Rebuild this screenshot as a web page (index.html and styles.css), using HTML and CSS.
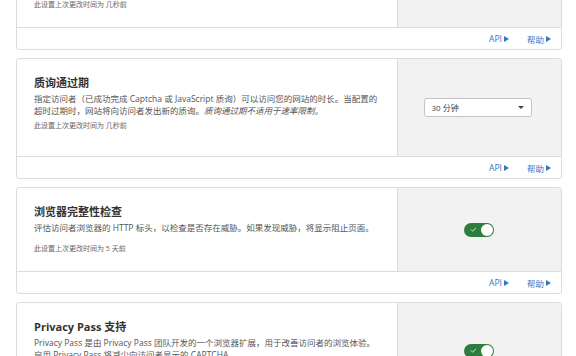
FILE: index.html
```html
<!DOCTYPE html>
<html lang="zh-CN">
<head>
<meta charset="utf-8">
<link rel="stylesheet" href="styles.css">
</head>
<body>
<div class="page">
  <section class="card card--partial">
    <div class="card-main">
      <div class="card-info">
        <p class="stamp">此设置上次更改时间为 几秒前</p>
      </div>
      <div class="card-control"></div>
    </div>
    <div class="card-foot">
      <a class="link">API <span class="tri"></span></a>
      <a class="link">帮助 <span class="tri"></span></a>
    </div>
  </section>

  <section class="card">
    <div class="card-main">
      <div class="card-info info--two">
        <h3 class="title">质询通过期</h3>
        <p class="desc">指定访问者（已成功完成 Captcha 或 JavaScript 质询）可以访问您的网站的时长。当配置的超时过期时，网站将向访问者发出新的质询。<em>质询通过期不适用于速率限制。</em></p>
        <p class="stamp">此设置上次更改时间为 几秒前</p>
      </div>
      <div class="card-control">
        <div class="select"><span>30 分钟</span><span class="caret"></span></div>
      </div>
    </div>
    <div class="card-foot">
      <a class="link">API <span class="tri"></span></a>
      <a class="link">帮助 <span class="tri"></span></a>
    </div>
  </section>

  <section class="card">
    <div class="card-main">
      <div class="card-info">
        <h3 class="title">浏览器完整性检查</h3>
        <p class="desc">评估访问者浏览器的 HTTP 标头，以检查是否存在威胁。如果发现威胁，将显示阻止页面。</p>
        <p class="stamp">此设置上次更改时间为 5 天前</p>
      </div>
      <div class="card-control">
        <div class="toggle"><svg class="check" viewBox="0 0 8 6" width="7" height="5"><path d="M1 3 L3 5 L7 1" fill="none" stroke="#cfe8d4" stroke-width="1.2"/></svg><span class="knob"></span></div>
      </div>
    </div>
    <div class="card-foot">
      <a class="link">API <span class="tri"></span></a>
      <a class="link">帮助 <span class="tri"></span></a>
    </div>
  </section>

  <section class="card">
    <div class="card-main">
      <div class="card-info">
        <h3 class="title">Privacy Pass 支持</h3>
        <p class="desc">Privacy Pass 是由 Privacy Pass 团队开发的一个浏览器扩展，用于改善访问者的浏览体验。启用 Privacy Pass 将减少向访问者显示的 CAPTCHA。</p>
        <p class="stamp">此设置上次更改时间为 几秒前</p>
      </div>
      <div class="card-control">
        <div class="toggle"><svg class="check" viewBox="0 0 8 6" width="7" height="5"><path d="M1 3 L3 5 L7 1" fill="none" stroke="#cfe8d4" stroke-width="1.2"/></svg><span class="knob"></span></div>
      </div>
    </div>
    <div class="card-foot">
      <a class="link">API <span class="tri"></span></a>
      <a class="link">帮助 <span class="tri"></span></a>
    </div>
  </section>
</div>
</body>
</html>
```

FILE: styles.css
```css
* { box-sizing: border-box; }
html, body { margin: 0; padding: 0; background: #fff; }
body {
  font-family: "Open Sans", "Noto Sans CJK SC", sans-serif;
  color: #333;
}
.page {
  display: flex;
  flex-direction: column;
  gap: 8px;
  padding: 0 14px 0 16px;
}
.card {
  border: 1px solid #dcdcdc;
  border-radius: 3px;
  background: #fff;
  overflow: hidden;
}
.card--partial { margin-top: -36px; }
.card--partial .card-info { padding-top: 35px; padding-bottom: 17px; }
.card--partial .stamp { margin-top: 0; }
.card-main {
  display: grid;
  grid-template-columns: 1fr 164px;
}
.card-info {
  padding: 16px 16px 17px 17px;
}
.card-control {
  background: #f2f2f2;
  border-left: 1px solid #dcdcdc;
  display: flex;
  align-items: center;
  justify-content: center;
}
.title {
  margin: 0;
  font-size: 11px;
  line-height: 16px;
  font-weight: 700;
  color: #333;
}
.desc {
  margin: 2px 0 0;
  font-size: 8.5px;
  line-height: 12px;
  color: #555;
}
.desc em { font-style: italic; }
.stamp {
  margin: 10px 0 0;
  font-size: 7px;
  line-height: 10px;
  color: #666;
}
.info--two { padding-bottom: 25px; }
.info--two .stamp { margin-top: 4px; }
.card-foot {
  border-top: 1px solid #dcdcdc;
  height: 22px;
  display: flex;
  justify-content: flex-end;
  align-items: center;
  gap: 18px;
  padding-right: 10px;
}
.link {
  font-size: 8.5px;
  color: #2f78c4;
  display: flex;
  align-items: center;
  gap: 2px;
}
.tri {
  width: 0; height: 0;
  border-top: 3.5px solid transparent;
  border-bottom: 3.5px solid transparent;
  border-left: 5px solid #2f78c4;
}
.select {
  width: 108px;
  height: 19px;
  margin-right: 4px;
  border: 1px solid #c4c4c4;
  border-radius: 3px;
  background: #fff;
  display: flex;
  align-items: center;
  justify-content: space-between;
  padding: 0 7px;
  font-size: 8px;
  color: #444;
}
.caret {
  width: 0; height: 0;
  border-left: 3px solid transparent;
  border-right: 3px solid transparent;
  border-top: 3.5px solid #444;
}
.toggle {
  width: 30px;
  height: 14px;
  border-radius: 7px;
  background: #2d7d3e;
  display: flex;
  align-items: center;
  justify-content: space-between;
  padding: 0 1px 0 6px;
  margin-right: 2px;
}
.check { display: block; }
.knob {
  width: 12px;
  height: 12px;
  border-radius: 50%;
  background: #fff;
}
```
